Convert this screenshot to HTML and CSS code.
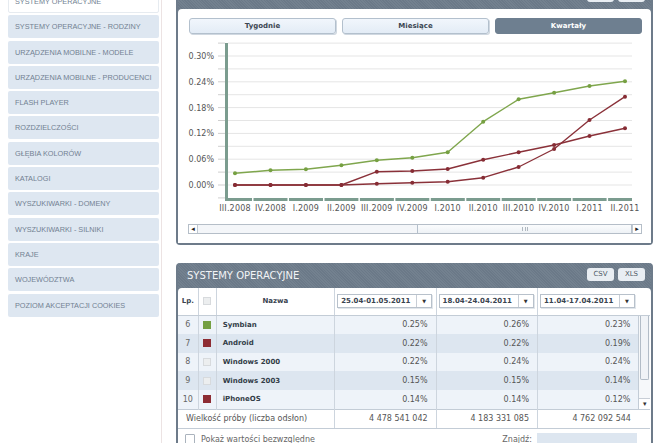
FILE: index.html
```html
<!DOCTYPE html>
<html lang="pl">
<head>
<meta charset="utf-8">
<title>Systemy operacyjne</title>
<link rel="stylesheet" href="styles.css">
</head>
<body>
<div class="page">
  <nav class="sidebar">
    <a class="nav-item current">SYSTEMY OPERACYJNE</a>
    <a class="nav-item">SYSTEMY OPERACYJNE - RODZINY</a>
    <a class="nav-item">URZĄDZENIA MOBILNE - MODELE</a>
    <a class="nav-item">URZĄDZENIA MOBILNE - PRODUCENCI</a>
    <a class="nav-item">FLASH PLAYER</a>
    <a class="nav-item">ROZDZIELCZOŚCI</a>
    <a class="nav-item">GŁĘBIA KOLORÓW</a>
    <a class="nav-item">KATALOGI</a>
    <a class="nav-item">WYSZUKIWARKI - DOMENY</a>
    <a class="nav-item">WYSZUKIWARKI - SILNIKI</a>
    <a class="nav-item">KRAJE</a>
    <a class="nav-item">WOJEWÓDZTWA</a>
    <a class="nav-item">POZIOM AKCEPTACJI COOKIES</a>
  </nav>

  <main class="main">
    <section class="panel chart-panel">
      <header class="panel-head">
        <span class="panel-title"></span>
        <div class="export"><span class="btn-export">CSV</span><span class="btn-export">XLS</span></div>
      </header>
      <div class="panel-body">
        <div class="tabs">
          <span class="tab">Tygodnie</span>
          <span class="tab">Miesiące</span>
          <span class="tab active">Kwartały</span>
        </div>
        <svg class="chart" width="472" height="182" viewBox="0 0 472 182">
          <g class="grid">
            <line x1="50" x2="454" y1="5.1" y2="5.1"/>
            <line x1="50" x2="454" y1="18" y2="18"/>
            <line x1="50" x2="454" y1="30.9" y2="30.9"/>
            <line x1="50" x2="454" y1="43.8" y2="43.8"/>
            <line x1="50" x2="454" y1="56.7" y2="56.7"/>
            <line x1="50" x2="454" y1="69.6" y2="69.6"/>
            <line x1="50" x2="454" y1="82.5" y2="82.5"/>
            <line x1="50" x2="454" y1="95.4" y2="95.4"/>
            <line x1="50" x2="454" y1="108.3" y2="108.3"/>
            <line x1="50" x2="454" y1="121.2" y2="121.2"/>
            <line x1="50" x2="454" y1="134.1" y2="134.1"/>
            <line x1="50" x2="454" y1="147" y2="147"/>
          </g>
          <g class="ticks">
            <line x1="40" x2="47" y1="5.1" y2="5.1"/>
            <line x1="40" x2="47" y1="18" y2="18"/>
            <line x1="40" x2="47" y1="30.9" y2="30.9"/>
            <line x1="40" x2="47" y1="43.8" y2="43.8"/>
            <line x1="40" x2="47" y1="56.7" y2="56.7"/>
            <line x1="40" x2="47" y1="69.6" y2="69.6"/>
            <line x1="40" x2="47" y1="82.5" y2="82.5"/>
            <line x1="40" x2="47" y1="95.4" y2="95.4"/>
            <line x1="40" x2="47" y1="108.3" y2="108.3"/>
            <line x1="40" x2="47" y1="121.2" y2="121.2"/>
            <line x1="40" x2="47" y1="134.1" y2="134.1"/>
            <line x1="40" x2="47" y1="147" y2="147"/>
            <line x1="40" x2="47" y1="159.9" y2="159.9"/>
          </g>
          <g class="ylabels">
            <text x="36" y="21">0.30%</text>
            <text x="36" y="46.8">0.24%</text>
            <text x="36" y="72.6">0.18%</text>
            <text x="36" y="98.4">0.12%</text>
            <text x="36" y="124.2">0.06%</text>
            <text x="36" y="150">0.00%</text>
          </g>
          <rect class="axis" x="47" y="5" width="3" height="158"/>
          <rect class="axis" x="47" y="160" width="407" height="3"/>
          <g class="axis-gaps">
            <rect x="74" y="160" width="1.5" height="3"/>
            <rect x="109.5" y="160" width="1.5" height="3"/>
            <rect x="145" y="160" width="1.5" height="3"/>
            <rect x="180.4" y="160" width="1.5" height="3"/>
            <rect x="215.9" y="160" width="1.5" height="3"/>
            <rect x="251.3" y="160" width="1.5" height="3"/>
            <rect x="286.8" y="160" width="1.5" height="3"/>
            <rect x="322.2" y="160" width="1.5" height="3"/>
            <rect x="357.7" y="160" width="1.5" height="3"/>
            <rect x="393.1" y="160" width="1.5" height="3"/>
            <rect x="428.6" y="160" width="1.5" height="3"/>
          </g>
          <g class="xlabels">
            <text x="57" y="173">III.2008</text>
            <text x="92.5" y="173">IV.2008</text>
            <text x="127.9" y="173">I.2009</text>
            <text x="163.4" y="173">II.2009</text>
            <text x="198.8" y="173">III.2009</text>
            <text x="234.3" y="173">IV.2009</text>
            <text x="269.7" y="173">I.2010</text>
            <text x="305.2" y="173">II.2010</text>
            <text x="340.6" y="173">III.2010</text>
            <text x="376.1" y="173">IV.2010</text>
            <text x="411.5" y="173">I.2011</text>
            <text x="447" y="173">II.2011</text>
          </g>
          <g class="series red">
            <polyline points="57,147 92.5,147 127.9,147 163.4,147 198.8,145.7 234.3,144.7 269.7,143.7 305.2,139.7 340.6,129 376.1,111 411.5,82 447,58.7"/>
            <circle cx="57" cy="147" r="2"/><circle cx="92.5" cy="147" r="2"/><circle cx="127.9" cy="147" r="2"/><circle cx="163.4" cy="147" r="2"/><circle cx="198.8" cy="145.7" r="2"/><circle cx="234.3" cy="144.7" r="2"/><circle cx="269.7" cy="143.7" r="2"/><circle cx="305.2" cy="139.7" r="2"/><circle cx="340.6" cy="129" r="2"/><circle cx="376.1" cy="111" r="2"/><circle cx="411.5" cy="82" r="2"/><circle cx="447" cy="58.7" r="2"/>
          </g>
          <g class="series red">
            <polyline points="57,147 92.5,147 127.9,147 163.4,147 198.8,133.7 234.3,133 269.7,131 305.2,121.7 340.6,114.3 376.1,107 411.5,98 447,90.3"/>
            <circle cx="57" cy="147" r="2"/><circle cx="92.5" cy="147" r="2"/><circle cx="127.9" cy="147" r="2"/><circle cx="163.4" cy="147" r="2"/><circle cx="198.8" cy="133.7" r="2"/><circle cx="234.3" cy="133" r="2"/><circle cx="269.7" cy="131" r="2"/><circle cx="305.2" cy="121.7" r="2"/><circle cx="340.6" cy="114.3" r="2"/><circle cx="376.1" cy="107" r="2"/><circle cx="411.5" cy="98" r="2"/><circle cx="447" cy="90.3" r="2"/>
          </g>
          <g class="series green">
            <polyline points="57,135.3 92.5,132.3 127.9,131.3 163.4,127.3 198.8,122.3 234.3,119.7 269.7,114.3 305.2,83.7 340.6,61.3 376.1,54.7 411.5,48 447,43.3"/>
            <circle cx="57" cy="135.3" r="2"/><circle cx="92.5" cy="132.3" r="2"/><circle cx="127.9" cy="131.3" r="2"/><circle cx="163.4" cy="127.3" r="2"/><circle cx="198.8" cy="122.3" r="2"/><circle cx="234.3" cy="119.7" r="2"/><circle cx="269.7" cy="114.3" r="2"/><circle cx="305.2" cy="83.7" r="2"/><circle cx="340.6" cy="61.3" r="2"/><circle cx="376.1" cy="54.7" r="2"/><circle cx="411.5" cy="48" r="2"/><circle cx="447" cy="43.3" r="2"/>
          </g>
        </svg>
        <div class="hscroll">
          <span class="sb-btn">◂</span>
          <div class="sb-track"><div class="sb-thumb"><span class="grip"></span></div></div>
          <span class="sb-btn">▸</span>
        </div>
      </div>
    </section>

    <section class="panel table-panel">
      <header class="panel-head">
        <span class="panel-title">SYSTEMY OPERACYJNE</span>
        <div class="export"><span class="btn-export">CSV</span><span class="btn-export">XLS</span></div>
      </header>
      <div class="panel-body">
        <table class="data">
          <colgroup>
            <col class="c-lp"><col class="c-chk"><col class="c-name"><col class="c-val"><col class="c-val"><col class="c-val"><col class="c-sb">
          </colgroup>
          <thead>
            <tr>
              <th>Lp.</th>
              <th><span class="swatch none"></span></th>
              <th>Nazwa</th>
              <th><div class="dd"><span class="dd-text">25.04-01.05.2011</span><span class="dd-arrow">▼</span></div></th>
              <th><div class="dd"><span class="dd-text">18.04-24.04.2011</span><span class="dd-arrow">▼</span></div></th>
              <th><div class="dd"><span class="dd-text">11.04-17.04.2011</span><span class="dd-arrow">▼</span></div></th>
              <th class="blank"></th>
            </tr>
          </thead>
          <tbody>
            <tr class="odd">
              <td class="lp">6</td><td class="chk"><span class="swatch green"></span></td><td class="name">Symbian</td>
              <td class="num">0.25%</td><td class="num">0.26%</td><td class="num">0.23%</td>
              <td class="vscroll" rowspan="5"><div class="vs"><div class="vs-thumb"></div><span class="vs-btn">▾</span></div></td>
            </tr>
            <tr class="even">
              <td class="lp">7</td><td class="chk"><span class="swatch red"></span></td><td class="name">Android</td>
              <td class="num">0.22%</td><td class="num">0.22%</td><td class="num">0.19%</td>
            </tr>
            <tr class="odd">
              <td class="lp">8</td><td class="chk"><span class="swatch none"></span></td><td class="name">Windows 2000</td>
              <td class="num">0.22%</td><td class="num">0.24%</td><td class="num">0.24%</td>
            </tr>
            <tr class="even">
              <td class="lp">9</td><td class="chk"><span class="swatch none"></span></td><td class="name">Windows 2003</td>
              <td class="num">0.15%</td><td class="num">0.15%</td><td class="num">0.14%</td>
            </tr>
            <tr class="odd">
              <td class="lp">10</td><td class="chk"><span class="swatch red"></span></td><td class="name">iPhoneOS</td>
              <td class="num">0.14%</td><td class="num">0.14%</td><td class="num">0.12%</td>
            </tr>
          </tbody>
          <tfoot>
            <tr class="sample">
              <td colspan="3" class="sample-label">Wielkość próby (liczba odsłon)</td>
              <td class="num">4 478 541 042</td><td class="num">4 183 331 085</td><td class="num">4 762 092 544</td>
              <td class="blank"></td>
            </tr>
            <tr class="options">
              <td colspan="7">
                <div class="opt-row">
                  <label class="check"><span class="box"></span>Pokaż wartości bezwzględne</label>
                  <label class="find">Znajdź:<span class="find-input"></span></label>
                </div>
              </td>
            </tr>
          </tfoot>
        </table>
      </div>
    </section>
  </main>
</div>
</body>
</html>
```

FILE: styles.css
```css
* { box-sizing: border-box; }
html, body { margin: 0; padding: 0; background: #fff; overflow: hidden; }
body { width: 664px; height: 443px; font-family: "DejaVu Sans", Verdana, sans-serif; }

.page { display: flex; align-items: flex-start; height: 443px; }

/* Sidebar */
.sidebar {
  width: 162px;
  height: 460px;
  margin-top: -10px;
  padding-left: 8px;
  border-right: 1px solid #ece3e3;
  display: flex;
  flex-direction: column;
  gap: 2.3px;
  flex: none;
}
.nav-item {
  display: flex;
  align-items: center;
  width: 151px;
  height: 23px;
  padding-left: 7px;
  background: #dee7f1;
  border-radius: 2px;
  font-family: "Liberation Sans", Arial, sans-serif;
  font-size: 7.3px;
  color: #728192;
  white-space: nowrap;
}
.nav-item.current { background: #fff; border: 1px solid #e6ebf0; padding-left: 6px; }

/* Main column */
.main { margin-left: 14px; width: 477px; flex: none; }

.panel {
  width: 477px;
  border: 2px solid #6d7b8a;
  border-top: 0;
  border-radius: 4px;
  background: repeating-linear-gradient(45deg, #6b7988 0 1px, #73818f 1px 2px);
}
.chart-panel { margin-top: -16px; }
.table-panel { margin-top: 18px; height: 200px; }

.panel-head {
  height: 25px;
  display: flex;
  align-items: flex-start;
  justify-content: space-between;
  padding: 0 6px 0 9px;
}
.panel-title {
  font-size: 10px;
  line-height: 25px;
  color: #f2f4f6;
}
.export { display: flex; gap: 4px; margin-top: 5px; }
.btn-export {
  width: 27px;
  height: 13px;
  background: #e9eef3;
  border-radius: 3px;
  font-size: 7px;
  line-height: 13px;
  text-align: center;
  color: #4f5a66;
}

.panel-body {
  background: #fff;
  border-radius: 4px 4px 0 0;
}
.chart-panel .panel-body { padding: 9px 0 9px; }

/* Tabs */
.tabs { display: flex; gap: 6px; margin: 0 9px 0 11px; height: 16px; }
.tab {
  flex: 1;
  display: flex;
  align-items: center;
  justify-content: center;
  border: 1px solid #b3c0cd;
  border-radius: 3px;
  background: linear-gradient(#f1f6fc, #e3ecf6);
  box-shadow: 1px 1px 0 #d0d8e1;
  font-size: 7px;
  font-weight: bold;
  color: #3b4652;
}
.tab.active { background: #6e7f90; border-color: #6e7f90; color: #fff; box-shadow: none; }

/* Chart */
.chart { display: block; margin-top: 4px; }
.chart .grid line { stroke: #e5e5e5; stroke-width: 1; }
.chart .ticks line { stroke: #cfcfcf; stroke-width: 1; }
.chart .axis { fill: #7b9c8f; }
.chart .axis-gaps rect { fill: #fff; }
.chart text { font-family: "DejaVu Sans", Verdana, sans-serif; font-size: 8px; fill: #555; }
.chart .ylabels text { text-anchor: end; }
.chart .xlabels text { text-anchor: middle; letter-spacing: 0.2px; }
.series polyline { fill: none; stroke-width: 1.4; stroke-linejoin: round; }
.series.green polyline { stroke: #7fa64d; }
.series.green circle { fill: #76a042; }
.series.red polyline { stroke: #8a3139; }
.series.red circle { fill: #862c34; }

/* Horizontal scrollbar */
.hscroll {
  display: flex;
  height: 10px;
  margin: 4px 9px 0 10px;
  border: 1px solid #b5bec8;
  background: #f4f6f9;
}
.sb-btn {
  width: 9px;
  flex: none;
  font-size: 7px;
  line-height: 8px;
  text-align: center;
  color: #222;
  background: #fff;
}
.sb-btn:first-child { border-right: 1px solid #c0c8d0; }
.sb-btn:last-child { border-left: 1px solid #c0c8d0; }
.sb-track { flex: 1; display: flex; justify-content: flex-end; }
.sb-thumb {
  width: 215px;
  border: 1px solid #b5c0cc;
  border-top: 0;
  border-bottom: 0;
  background: linear-gradient(#fbfcfd, #eef2f6);
  display: flex;
  align-items: center;
  justify-content: center;
}
.grip { width: 6px; height: 4px; border-left: 1px solid #b0b8c0; border-right: 1px solid #b0b8c0; position: relative; }
.grip::after { content: ""; position: absolute; left: 2px; top: 0; width: 1px; height: 4px; background: #b0b8c0; }

/* Table */
.data {
  width: 472px;
  table-layout: fixed;
  border-collapse: collapse;
  font-size: 8px;
  color: #555;
}
.c-lp { width: 20px; }
.c-chk { width: 18px; }
.c-name { width: 118px; }
.c-val { width: 101px; }
.c-sb { width: 11px; }

.data th {
  height: 27px;
  padding: 0;
  font-size: 7px;
  font-weight: bold;
  color: #3a4450;
  text-align: center;
  border-left: 1px solid #cdd5de;
  border-bottom: 1px solid #c3ccd6;
}
.data th:first-child { border-left: 0; }
.data th.blank { border-left: 0; }

.dd {
  display: flex;
  align-items: stretch;
  width: 95px;
  height: 14px;
  margin-left: 2px;
  border: 1px solid #b8c1cb;
  box-shadow: 1px 1px 0 #e1e6eb;
  background: #fff;
}
.dd-text { flex: 1; text-align: left; padding-left: 3px; line-height: 12px; font-size: 7px; color: #3a4450; }
.dd-arrow { width: 15px; border-left: 1px solid #c8ced6; font-size: 5px; line-height: 12px; text-align: center; color: #333; }

.data td {
  height: 18.6px;
  padding: 0;
  border-left: 1px solid #cdd5de;
  white-space: nowrap;
}
.data td:first-child { border-left: 0; }
.data tr.odd td { background: #eef3f9; }
.data tr.even td { background: #dde6f0; }
.data .lp { text-align: center; color: #666; }
.data .chk { text-align: center; }
.data .name { padding-left: 6px; font-size: 7px; font-weight: bold; color: #333d48; }
.data .num { text-align: right; padding-right: 8px; }

.swatch { display: inline-block; width: 8px; height: 8px; vertical-align: middle; }
.swatch.green { background: #75a043; }
.swatch.red { background: #8d2c33; }
.swatch.none { background: #eceeef; border: 1px solid #d7dadd; }

.data td.vscroll { background: #f6f8fa !important; border-left: 1px solid #c3ccd6; vertical-align: top; }
.vs { display: flex; flex-direction: column; justify-content: space-between; height: 93px; }
.vs-thumb { height: 64px; margin: 0 1px; border: 1px solid #b2bcc7; border-top: 0; border-radius: 0 0 2px 2px; background: #f0f3f7; }
.vs-btn { height: 11px; font-size: 7px; line-height: 11px; text-align: center; color: #333; border-top: 1px solid #c8ced6; background: #fff; }

.data tr.sample td { height: 19px; background: #fff; border-top: 1px solid #c3ccd6; border-bottom: 1px solid #c3ccd6; }
.data tr.sample td.blank { border-left: 0; }
.data .sample-label { padding-left: 8px; }

.data tr.options td { height: 20px; border-left: 0; vertical-align: top; }
.opt-row { display: flex; justify-content: space-between; align-items: center; padding: 4px 13px 0 7px; }
.check { display: flex; align-items: center; gap: 6px; color: #666; }
.box { width: 10px; height: 10px; border: 1px solid #aab3bd; border-radius: 1px; background: #fff; }
.find { display: flex; align-items: center; gap: 5px; color: #666; }
.find-input { width: 100px; height: 13px; background: #dde6f0; }
```
